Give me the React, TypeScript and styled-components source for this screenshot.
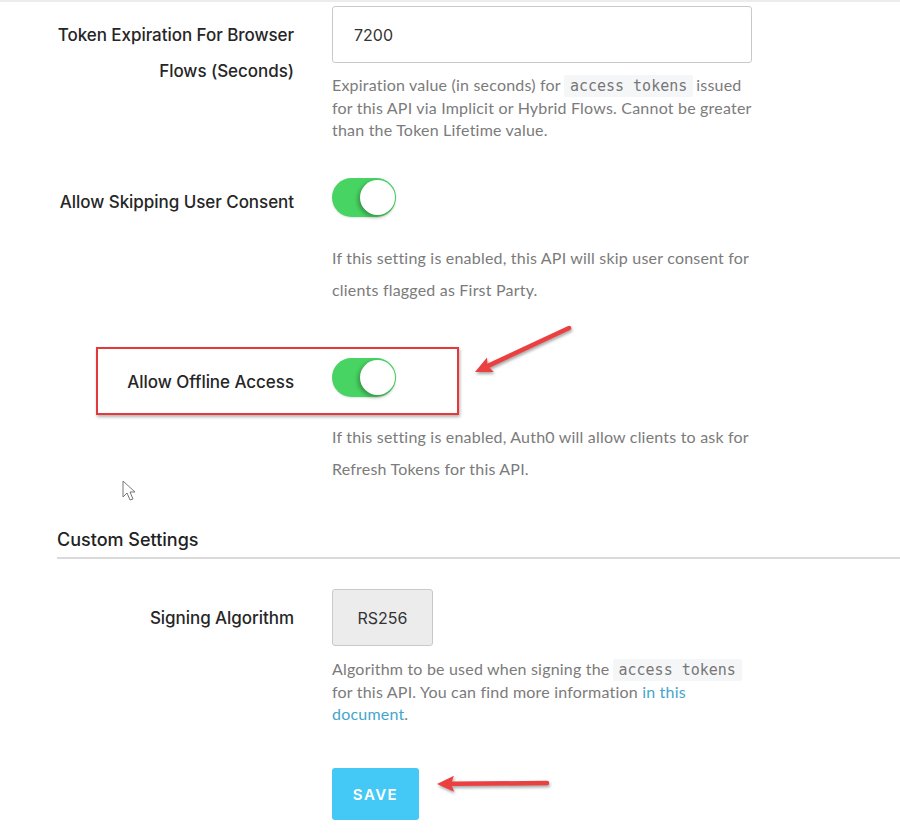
import React, { FC } from "react";
import styled, { createGlobalStyle } from "styled-components";

const GlobalStyle = createGlobalStyle`
  html, body {
    margin: 0;
    padding: 0;
    background: #fff;
  }
  body {
    font-family: Inter, "Noto Sans", sans-serif;
    color: #222;
  }
`;

const Page = styled.div`
  position: relative;
  width: 900px;
  height: 836px;
  box-sizing: border-box;
  border-top: 2px solid #ececec;
  padding: 4px 0 0 57px;
  overflow: hidden;
`;

const Row = styled.div<{ $top: number }>`
  position: relative;
  display: grid;
  grid-template-columns: 237px 460px;
  column-gap: 38px;
  align-items: start;
  margin-top: ${(p) => p.$top}px;
`;

const Label = styled.div<{ $pad: number }>`
  text-align: right;
  font-family: Inter, sans-serif;
  font-size: 17px;
  font-weight: 500;
  line-height: 36px;
  color: #262626;
  padding-top: ${(p) => p.$pad}px;
  letter-spacing: -0.05px;
  white-space: nowrap;
`;

const Field = styled.div`
  display: flex;
  flex-direction: column;
  align-items: flex-start;
`;

const TextInput = styled.div`
  box-sizing: border-box;
  width: 420px;
  height: 57px;
  border: 1px solid #c9c9c9;
  border-radius: 3px;
  padding-left: 21px;
  display: flex;
  align-items: center;
  font-family: Inter, sans-serif;
  font-size: 16px;
  color: #333;
`;

const Help = styled.p<{ $lh: number; $top: number }>`
  margin: ${(p) => p.$top}px 0 0;
  font-family: Lato, sans-serif;
  font-size: 16px;
  letter-spacing: 0.2px;
  line-height: ${(p) => p.$lh}px;
  color: #7b7b7b;
  white-space: nowrap;
`;

const Code = styled.code`
  font-family: "DejaVu Sans Mono", monospace;
  font-size: 15px;
  letter-spacing: 0;
  color: #777;
  background: #f5f6f7;
  border-radius: 2px;
  padding: 2px 6px;
  margin: 0 3px;
`;

const Link = styled.a`
  color: #44a5cc;
  text-decoration: none;
`;

const Track = styled.div`
  position: relative;
  width: 64px;
  height: 39px;
  border-radius: 20px;
  background: #48d462;
  box-shadow: 0 1px 2px rgba(0, 0, 0, 0.12);
`;

const Knob = styled.div`
  position: absolute;
  top: 2px;
  right: 1px;
  width: 35px;
  height: 35px;
  border-radius: 50%;
  background: #fff;
  box-shadow: -2px 2px 4px rgba(0, 0, 0, 0.3);
`;

const Toggle: FC = () => (
  <Track>
    <Knob />
  </Track>
);

const Heading = styled.div`
  margin-top: 43px;
  font-family: Inter, sans-serif;
  font-size: 18px;
  font-weight: 500;
  line-height: 24px;
  color: #222;
  padding-bottom: 5px;
  border-bottom: 2px solid #dadada;
`;

const Select = styled.div`
  box-sizing: border-box;
  width: 101px;
  height: 57px;
  border: 1px solid #c9c9c9;
  border-radius: 3px;
  background: #ececec;
  display: flex;
  align-items: center;
  justify-content: center;
  font-family: Inter, sans-serif;
  font-size: 16px;
  color: #333;
`;

const SaveButton = styled.button`
  width: 87px;
  height: 52px;
  border: none;
  border-radius: 3px;
  background: #44c8f5;
  color: #fff;
  font-family: Inter, sans-serif;
  font-size: 15px;
  font-weight: 600;
  letter-spacing: 1.5px;
  cursor: pointer;
`;

const Highlight = styled.div`
  position: absolute;
  left: 39px;
  top: -11px;
  width: 363px;
  height: 68px;
  box-sizing: border-box;
  border: 2px solid #e5383b;
  box-shadow: 1px 2px 3px rgba(0, 0, 0, 0.3);
  pointer-events: none;
`;

const Overlay = styled.svg`
  position: absolute;
  left: 0;
  top: -2px;
  pointer-events: none;
  overflow: visible;
`;

const Arrow: FC<{ x1: number; y1: number; x2: number; y2: number }> = ({ x1, y1, x2, y2 }) => {
  const dx = x2 - x1;
  const dy = y2 - y1;
  const len = Math.hypot(dx, dy);
  const ux = dx / len;
  const uy = dy / len;
  const hl = 17;
  const hw = 8;
  const bx = x2 - ux * hl;
  const by = y2 - uy * hl;
  const pts = `${x2},${y2} ${bx - uy * hw},${by + ux * hw} ${bx + ux * 3},${by + uy * 3} ${bx + uy * hw},${by - ux * hw}`;
  return (
    <g style={{ filter: "drop-shadow(1px 2px 1.5px rgba(0,0,0,0.35))" }}>
      <line x1={x1} y1={y1} x2={bx + ux * 2} y2={by + uy * 2} stroke="#ec3f3f" strokeWidth={4.5} strokeLinecap="round" />
      <polygon points={pts} fill="#ec3f3f" />
    </g>
  );
};

const App: FC = () => (
  <>
    <GlobalStyle />
    <Page>
      <Row $top={0}>
        <Label $pad={11}>
          Token Expiration For Browser
          <br />
          Flows (Seconds)
        </Label>
        <Field>
          <TextInput>7200</TextInput>
          <Help $lh={22} $top={11}>
            Expiration value (in seconds) for<Code>access tokens</Code>issued
            <br />
            for this API via Implicit or Hybrid Flows. Cannot be greater
            <br />
            than the Token Lifetime value.
          </Help>
        </Field>
      </Row>

      <Row $top={37}>
        <Label $pad={6}>Allow Skipping User Consent</Label>
        <Field>
          <Toggle />
          <Help $lh={32} $top={25}>
            If this setting is enabled, this API will skip user consent for
            <br />
            clients flagged as First Party.
          </Help>
        </Field>
      </Row>

      <Row $top={52}>
        <Highlight />
        <Label $pad={6}>Allow Offline Access</Label>
        <Field>
          <Toggle />
          <Help $lh={32} $top={24}>
            If this setting is enabled, Auth0 will allow clients to ask for
            <br />
            Refresh Tokens for this API.
          </Help>
        </Field>
      </Row>

      <Heading>Custom Settings</Heading>

      <Row $top={30}>
        <Label $pad={11}>Signing Algorithm</Label>
        <Field>
          <Select>RS256</Select>
          <Help $lh={22} $top={12}>
            Algorithm to be used when signing the<Code>access tokens</Code>
            <br />
            for this API. You can find more information <Link href="#">in this</Link>
            <br />
            <Link href="#">document</Link>.
          </Help>
        </Field>
      </Row>

      <Row $top={43}>
        <div />
        <Field>
          <SaveButton>SAVE</SaveButton>
        </Field>
      </Row>

      <Overlay width={900} height={838}>
        <Arrow x1={569} y1={328} x2={475} y2={372} />
        <Arrow x1={547} y1={783} x2={437} y2={784} />
        <path
          d="M123 481 L123 497 L127 493 L130 500 L133 499 L130 492 L135 492 Z"
          fill="#fff"
          stroke="#777"
          strokeWidth={1}
          strokeLinejoin="round"
        />
      </Overlay>
    </Page>
  </>
);

export default App;
